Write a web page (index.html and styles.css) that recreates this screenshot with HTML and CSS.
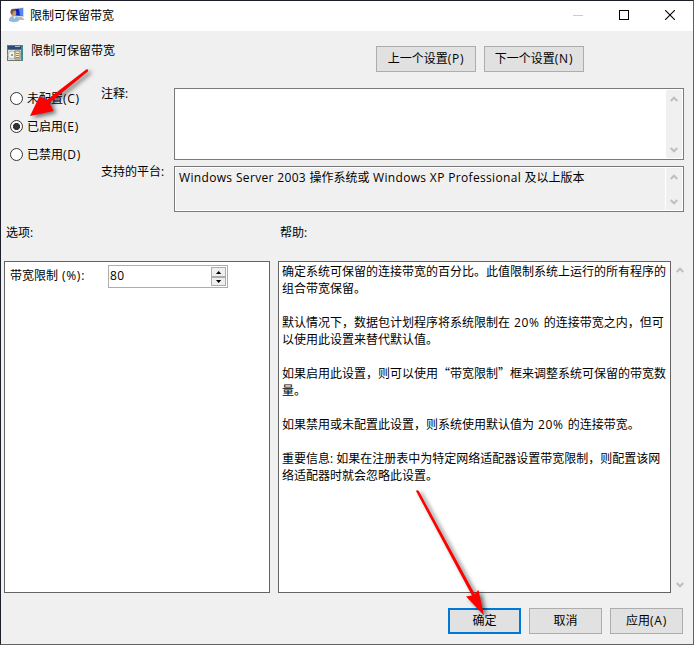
FILE: index.html
```html
<!DOCTYPE html>
<html lang="zh-CN">
<head>
<meta charset="utf-8">
<title>限制可保留带宽</title>
<link rel="stylesheet" href="styles.css">
</head>
<body>
<div class="window">
  <header class="titlebar">
    <svg class="app-icon" width="16" height="16" viewBox="0 0 16 16">
      <path d="M5 1L15 0.5V10L5 9.5Z" fill="#d5d8d4"/>
      <path d="M6 2L14 1.5V9L6 8.5Z" fill="#0b23c4"/>
      <path d="M10 2L14 1.5V9L11 8.8Z" fill="#5686ee"/>
      <path d="M9 10H13L15 12V13H9Z" fill="#b9bbb5"/>
      <path d="M0 14C0 10 2 9 5 9C8 9 10 10 10 14C7 15.5 3 15.5 0 14Z" fill="#8dbbe0"/>
      <path d="M4 9L5.5 12L7 9Z" fill="#eef5fb"/>
      <ellipse cx="4.7" cy="6" rx="2.6" ry="3.5" fill="#c89a68"/>
      <path d="M1.5 6C1 2 4 1 6.500 2.500L7 4L4 4.500L3 8Z" fill="#66584b"/>
    </svg>
    <h1>限制可保留带宽</h1>
    <div class="controls">
      <svg width="10" height="10"><path d="M0 5.500H10" stroke="#ccc"/></svg>
      <svg width="10" height="10"><rect x=".5" y=".5" width="9" height="9" fill="none" stroke="#000"/></svg>
      <svg width="10" height="10"><path d="M0 0L10 10M10 0L0 10" stroke="#000" stroke-width="1.100"/></svg>
    </div>
  </header>

  <section class="policy">
    <svg class="policy-icon" width="16" height="16" viewBox="0 0 16 16">
      <rect width="16" height="16" fill="#6e7468"/>
      <rect x="1" y="1" width="13" height="3" fill="#294d78"/>
      <rect x="8" y="1" width="5" height="1" fill="#b5bcc2"/>
      <rect x="14" y="0" width="2" height="16" fill="#3a8d93"/>
      <rect x="1" y="5" width="13" height="10" fill="#dedfd5"/>
      <circle cx="5" cy="10" r="4" fill="#f1f2f0" stroke="#b3bdb5"/>
      <circle cx="5" cy="10" r="1" fill="#748279"/>
      <path d="M8 6H13V14H8Z" fill="#f5edcb" stroke="#817b5d"/>
      <path d="M9 8.500H12M9 10.500H12M9 12.500H12" stroke="#8f8b6c"/>
    </svg>
    <h2>限制可保留带宽</h2>
    <div class="nav">
      <button class="btn">上一个设置<span class="key">(P)</span></button>
      <button class="btn">下一个设置<span class="key">(N)</span></button>
    </div>
  </section>

  <section class="settings">
    <div class="radios">
      <label class="radio"><i class="dot"></i><span>未配置<span class="key">(C)</span></span></label>
      <label class="radio"><i class="dot on"></i><span>已启用<span class="key">(E)</span></span></label>
      <label class="radio"><i class="dot"></i><span>已禁用<span class="key">(D)</span></span></label>
    </div>
    <div class="fields">
      <span class="label">注释:</span>
      <div class="box comment">
        <div class="text"></div>
        <div class="scroll">
          <svg width="8" height="6"><path d="M.7 5L4 1.700L7.300 5"/></svg>
          <svg width="8" height="6"><path d="M.7 1L4 4.300L7.300 1"/></svg>
        </div>
      </div>
      <span class="label">支持的平台:</span>
      <div class="box platform">
        <div class="text"><span class="win">Windows Server 2003 </span>操作系统或<span class="win"> Windows XP Professional </span>及以上版本</div>
        <div class="scroll">
          <svg width="8" height="6"><path d="M.7 5L4 1.700L7.300 5"/></svg>
          <svg width="8" height="6"><path d="M.7 1L4 4.300L7.300 1"/></svg>
        </div>
      </div>
    </div>
  </section>

  <section class="captions"><span>选项:</span><span>帮助:</span></section>

  <section class="panes">
    <div class="pane options">
      <span>带宽限制<span class="key"> (%):</span></span>
      <div class="spin">
        <span class="win">80</span>
        <div class="steps">
          <i class="step"><svg width="7" height="4"><path d="M0 4L3.500 0L7 4Z"/></svg></i>
          <i class="step"><svg width="7" height="4"><path d="M0 0L3.500 4L7 0Z"/></svg></i>
        </div>
      </div>
    </div>
    <div class="pane help">
      <p>确定系统可保留的连接带宽的百分比。此值限制系统上运行的所有程序的<br>组合带宽保留。</p>
      <p>默认情况下，数据包计划程序将系统限制在<span class="key"> 20% </span>的连接带宽之内，但可<br>以使用此设置来替代默认值。</p>
      <p>如果启用此设置，则可以使用<span class="quote">“</span>带宽限制<span class="quote">”</span>框来调整系统可保留的带宽数<br>量。</p>
      <p>如果禁用或未配置此设置，则系统使用默认值为<span class="key"> 20% </span>的连接带宽。</p>
      <p>重要信息: 如果在注册表中为特定网络适配器设置带宽限制，则配置该网<br>络适配器时就会忽略此设置。</p>
    </div>
    <div class="scroll outer">
      <svg width="8" height="6"><path d="M.7 5L4 1.700L7.300 5"/></svg>
      <svg width="8" height="6"><path d="M.7 1L4 4.300L7.300 1"/></svg>
    </div>
  </section>

  <footer class="actions">
    <button class="btn primary">确定</button>
    <button class="btn">取消</button>
    <button class="btn">应用<span class="key">(A)</span></button>
  </footer>
</div>

<svg class="arrows" width="694" height="645">
  <g class="arrow">
    <path d="M86.500 69.300Q88.700 69 88.200 71.300L49.500 103L53.500 111L30 116L39.500 96.300L47 99.700Z"/>
    <path d="M416 491Q417 489.500 418.800 491L474.800 594L478.500 590L484 615.500L466 596.500L472 595.500Z"/>
  </g>
</svg>
</body>
</html>
```
FILE: styles.css
```css
* {
  box-sizing: border-box;
}

body {
  margin: 0;
  font: 12px/17px "Open Sans", "Noto Sans CJK SC", sans-serif;
  color: #000;
}

svg {
  display: block;
  flex: none;
}

h1,
h2,
p {
  margin: 0;
  font: inherit;
}

.window {
  width: 694px;
  height: 645px;
  border: 1px solid #1b202b;
  border-right-color: #5e6063;
  border-bottom-color: #606163;
  background: #f0f0f0;
}

.titlebar {
  display: flex;
  align-items: center;
  height: 30px;
  padding: 0 18px 2px 8px;
  background: #fff;
}

.titlebar h1 {
  margin-left: 5px;
}

.controls {
  display: flex;
  gap: 36px;
  margin-left: auto;
}

.policy {
  display: flex;
  height: 57px;
  padding: 14px 109px 0 6px;
}

.policy h2 {
  margin: -3px 0 0 8px;
}

.nav {
  display: flex;
  gap: 8px;
  margin: 1px 0 0 auto;
}

.btn {
  width: 73px;
  height: 26px;
  padding: 0 0 1px;
  border: 1px solid #adadad;
  background: #e1e1e1;
  color: #000;
  font: inherit;
  white-space: nowrap;
}

.nav .btn {
  width: 100px;
}

.btn.primary {
  border: 2px solid #0078d7;
}

.key {
  letter-spacing: .75px;
}

.win {
  letter-spacing: .34px;
}

.settings {
  display: flex;
  height: 124px;
  padding-left: 9px;
}

.radios {
  width: 91px;
  padding-top: 2px;
}

.radio {
  display: flex;
  align-items: center;
  gap: 4px;
  height: 17px;
  margin-bottom: 11px;
}

.dot {
  flex: none;
  width: 13px;
  height: 13px;
  border: 1px solid #333;
  border-radius: 50%;
  background: #fff;
}

.dot.on {
  background: radial-gradient(circle, #333 3.2px, #fff 3.900px);
}

.fields {
  display: grid;
  grid-template-columns: 73px 510px;
  grid-template-rows: 72px 46px;
  row-gap: 6px;
}

.label {
  margin-top: -3px;
}

.box {
  display: flex;
  padding: 1px;
  border: 1px solid #7a7a7a;
  background: #fff;
}

.text {
  flex: 1;
  padding: 1px 3px;
  white-space: nowrap;
}

.platform .text {
  margin-right: 1px;
  background: #f0f0f0;
}

.scroll {
  display: flex;
  flex-direction: column;
  align-items: center;
  justify-content: space-between;
  width: 16px;
  padding: 6px 0 5px;
  background: #f0f0f0;
}

.scroll path {
  fill: none;
  stroke: #bfbfbf;
  stroke-width: 2;
}

.captions {
  display: grid;
  grid-template-columns: 274px 1fr;
  height: 49px;
  padding: 12px 0 0 5px;
}

.panes {
  display: grid;
  grid-template-columns: 266px 393px 17px;
  column-gap: 8px;
  height: 332px;
  margin-left: 3px;
}

.pane {
  border: 1px solid #646464;
  background: #fff;
}

.help {
  padding: 1px 3px;
  white-space: nowrap;
}

.help p + p {
  margin-top: 17px;
}

.quote {
  font-family: "Noto Sans CJK SC", sans-serif;
  line-height: 1;
}

.outer {
  width: 17px;
  margin-left: -8px;
}

.options {
  display: flex;
  padding: 3px 0 0 5px;
}

.options > span {
  width: 98px;
  padding-top: 2px;
}

.spin {
  display: flex;
  justify-content: space-between;
  width: 120px;
  height: 23px;
  padding: 1px;
  border: 1px solid #abadb3;
}

.steps {
  display: grid;
  grid-template-rows: 10px 9px;
  width: 15px;
}

.step {
  display: grid;
  place-items: center;
  border: 1px solid #acacac;
  background: #efefef;
}

.step svg {
  width: 5px;
  height: 3px;
  overflow: visible;
}

.step path {
  transform: scale(.75);
}

.actions {
  display: flex;
  justify-content: flex-end;
  gap: 8px;
  padding: 15px 10px 0 0;
}

.arrows {
  position: absolute;
  top: 0;
  left: 0;
}

.arrow {
  fill: #fe0000;
  filter: drop-shadow(3px 2px 2px rgba(0, 0, 0, .55));
}
```
